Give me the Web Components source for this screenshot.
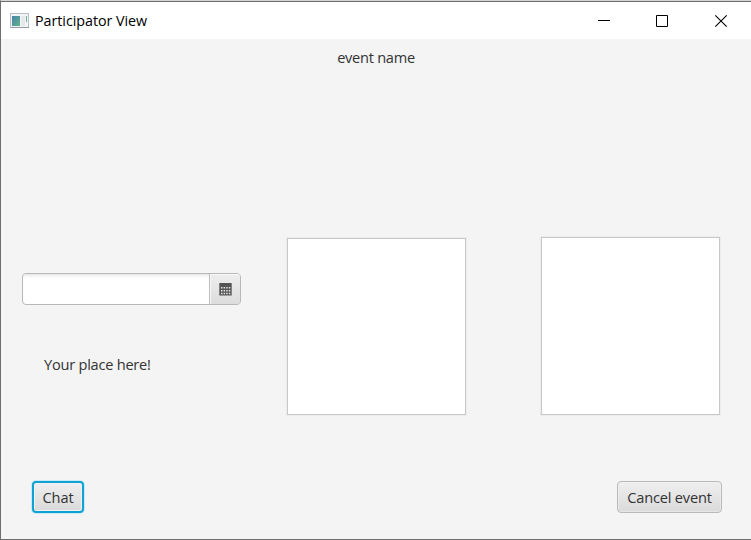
<!DOCTYPE html>
<html lang="en"><head><meta charset="utf-8"><title>Participator View</title>
<style>
html,body{margin:0;width:751px;height:540px;overflow:hidden;background:#f4f4f4}
body{font-family:"Open Sans","Noto Sans",sans-serif;font-size:14.6px;color:#333}
</style></head><body>
<app-window>
  <title-bar slot="title">Participator View</title-bar>
  <text-label slot="name" style="--ls:-.27px">event name</text-label>
  <left-column slot="body">
    <date-picker></date-picker>
    <text-label style="--ls:-.24px">Your place here!</text-label>
  </left-column>
  <list-box slot="body" style="margin:199px 0 0 46px;height:177px"></list-box>
  <list-box slot="body" style="margin:198px 0 0 75px;height:178px"></list-box>
  <push-button slot="foot" focused style="width:52px;--ls:-.1px">Chat</push-button>
  <push-button slot="foot" style="width:105px;--ls:-.2px">Cancel event</push-button>
</app-window>
<script>
function define(name, html){
  customElements.define(name, class extends HTMLElement{
    constructor(){ super(); this.attachShadow({mode:'open'}).innerHTML = html; }
  });
}
define('app-window', `<style>
:host{display:flex;flex-direction:column;box-sizing:border-box;width:751px;height:540px;background:#f4f4f4;border-top:1px solid #d5d5d5;border-left:1px solid #6e6e6e;border-bottom:1px solid #6e6e6e}
.name{height:35px;display:flex;justify-content:center;align-items:center;margin-bottom:-35px}
.body{height:376px;display:flex;align-items:flex-start;padding-left:21px}
.foot{display:flex;justify-content:space-between;align-items:flex-start;padding:66px 29px 0 31px}
main{flex:1;display:flex;flex-direction:column}
</style><slot name="title"></slot><main><div class="name"><slot name="name"></slot></div><div class="body"><slot name="body"></slot></div><div class="foot"><slot name="foot"></slot></div></main>`);
define('title-bar', `<style>
:host{display:flex;align-items:center;height:38px;box-sizing:border-box;background:#fff;border-top:1px solid #6e6e6e;padding-left:9px;color:#000;font-size:14.3px;letter-spacing:-.04px}
.t{margin-left:5px;flex:1;line-height:20px;white-space:nowrap}
svg{display:block}
</style><svg width="20" height="16" viewBox="0 0 20 16"><defs><linearGradient id="g" x2="1" y2="1"><stop stop-color="#4a83ac"/><stop offset="1" stop-color="#5eb386"/></linearGradient></defs>
<rect x=".5" y=".5" width="18" height="14" fill="#f3f4f5" stroke="#b8bdc6"/><path d="M1 14.5h18" stroke="#939aa5"/><rect x="2" y="3" width="8" height="10" fill="url(#g)"/><rect x="11" y="3" width="4" height="10" fill="#e6e9eb"/><path d="M16.5 3v6" stroke="#6fb58f"/></svg>
<span class="t"><slot></slot></span>
<svg width="153" height="36" viewBox="598 2 153 36" fill="none" stroke="#000"><path d="M598 19.5h12M656.5 14.5h11v11h-11z"/><path d="M715.3 14.3l11.4 11.4M726.7 14.3l-11.4 11.4" stroke-width="1.1"/></svg>`);
define('text-label', `<style>:host{display:block;line-height:20px;white-space:nowrap;letter-spacing:var(--ls)}</style><slot></slot>`);
define('left-column', `<style>:host{display:flex;flex-direction:column;width:219px;padding-top:234px;gap:49px}
::slotted(text-label){margin-left:22px}</style><slot></slot>`);
define('date-picker', `<style>
:host{display:flex;box-sizing:border-box;width:219px;height:32px;border:1px solid #b8b8b8;border-radius:4px;overflow:hidden;background:#fff}
.f{flex:1;box-shadow:inset 0 4px 4px -3px #ddd}
.b{width:30px;border-left:1px solid #bdbdbd;background:linear-gradient(#eee,#dcdcdc);box-shadow:inset 1px 1px #f8f8f8;display:flex;align-items:center;justify-content:center}
</style><div class="f"></div><div class="b"><svg width="13" height="13" viewBox="0 0 13 13"><path fill="#555" d="M.3 0h12.4v12.5H.3z"/><path fill="#e4e4e4" d="M2 4h1.5v1.5H2zm2.6 0h1.5v1.5H4.6zm2.6 0h1.5v1.5H7.2zm2.6 0h1.5v1.5H9.8zM2 7h1.5v1.5H2zm2.6 0h1.5v1.5H4.6zm2.6 0h1.5v1.5H7.2zm2.6 0h1.5v1.5H9.8zM2 9.7h1.5v1.5H2zm2.6 0h1.5v1.5H4.6zm2.6 0h1.5v1.5H7.2zm2.6 0h1.5v1.5H9.8z"/></svg></div>`);
define('list-box', `<style>:host{display:block;box-sizing:border-box;width:179px;background:#fff;border:1px solid #c8c8c8;box-shadow:0 0 0 1px #ececec}</style>`);
define('push-button', `<style>
:host{display:flex;box-sizing:border-box;height:32px;align-items:center;justify-content:center;border:1px solid #b9b9b9;border-radius:4px;background:linear-gradient(#efefef,#dadada);box-shadow:inset 0 0 0 1px #f1f1f180;white-space:nowrap;letter-spacing:var(--ls);line-height:20px}
:host([focused]){border:2px solid #10a2d2;box-shadow:0 0 0 1px #c9e9f4,inset 0 0 0 1px #f1f1f1}
</style><slot></slot>`);
</script></body></html>
